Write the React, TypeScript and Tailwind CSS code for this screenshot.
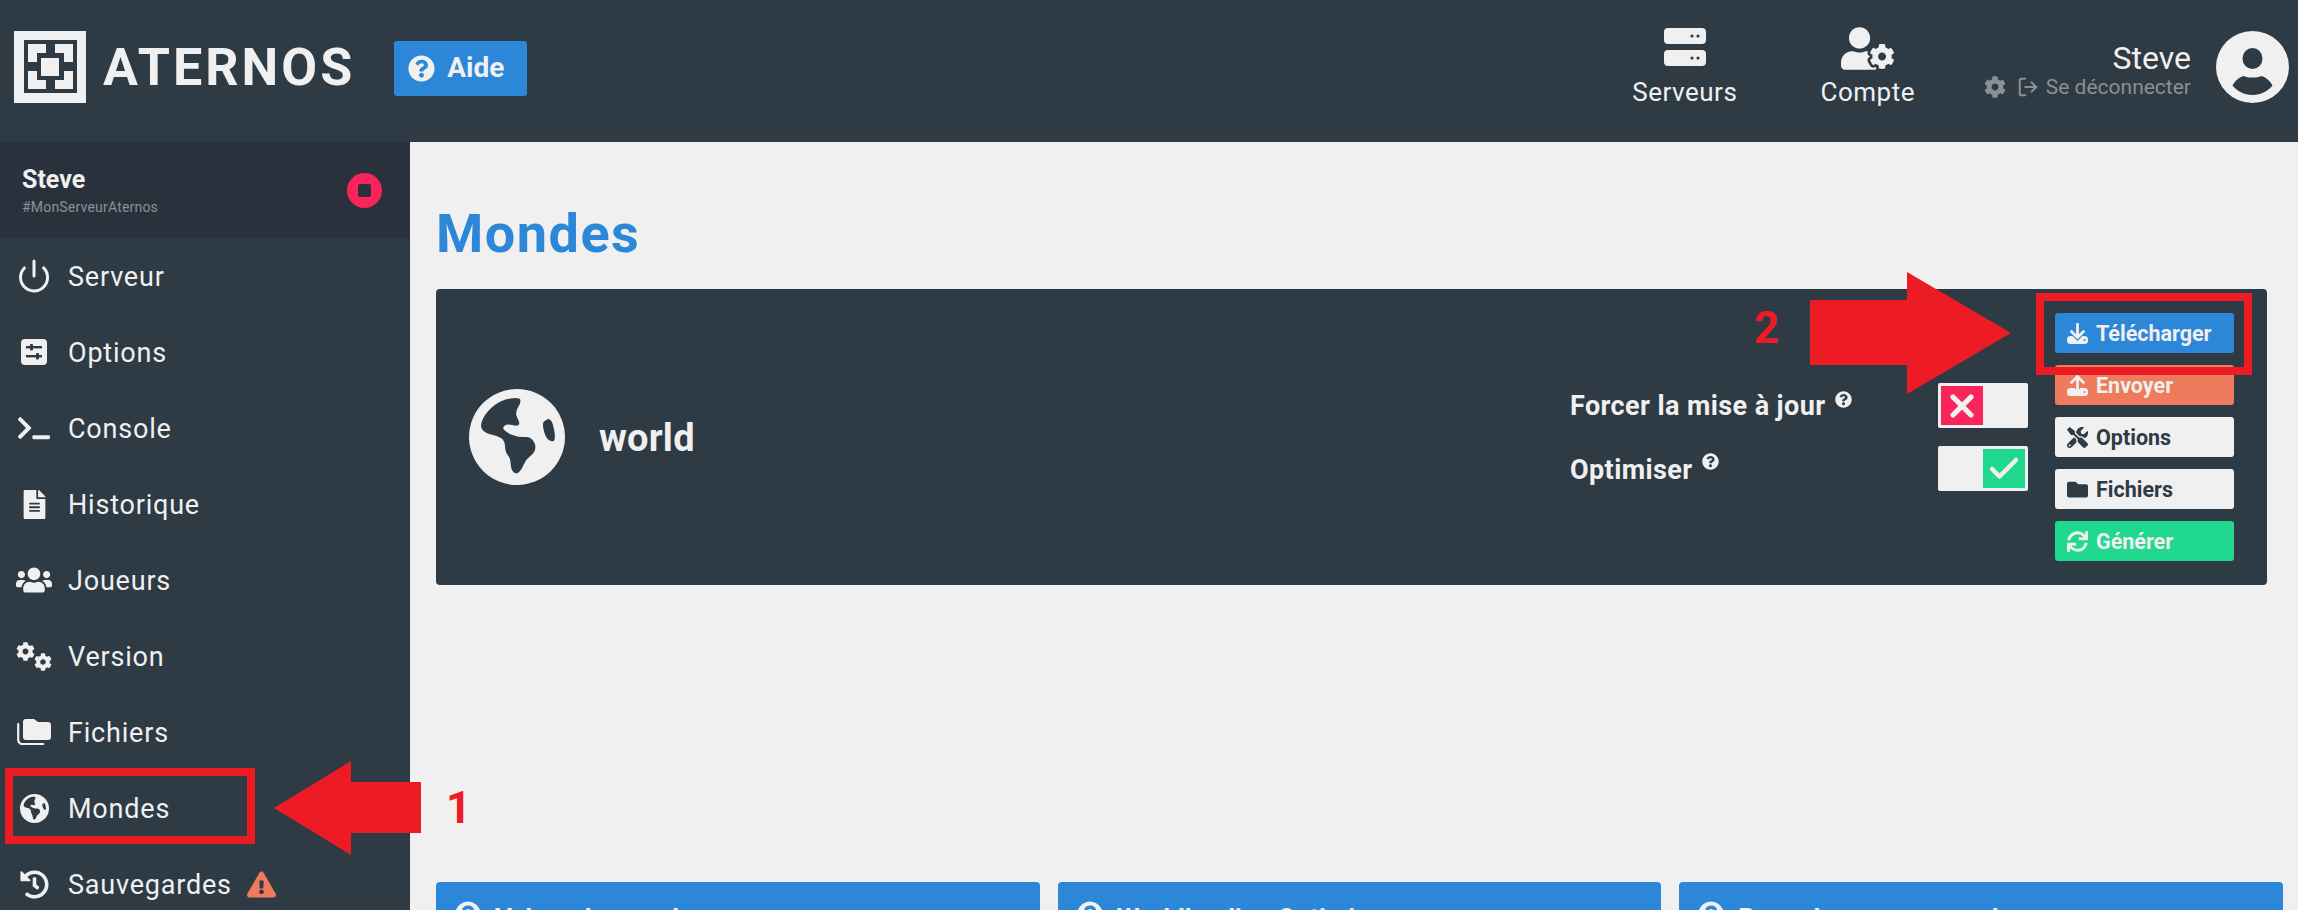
import React from "react";
import {
  FaCog, FaExclamationTriangle, FaFileAlt, FaFolder, FaHistory,
  FaQuestionCircle, FaSync, FaTerminal, FaTools, FaUserCog, FaUsers,
} from "react-icons/fa";
import { Check, LogOut, Power, X } from "lucide-react";

const DARK = "#2e3a44";

const Logo = () => (
  <svg width="72" height="72" viewBox="0 0 72 72" className="mb-[8px] shrink-0">
    <rect width="72" height="72" fill="#f0f0f0" />
    <rect x="10" y="9" width="53" height="53" fill={DARK} />
    <g fill="#f0f0f0">
      <polygon points="14,13 32,13 32,22 23,22 23,31 14,31" />
      <polygon points="41,13 59,13 59,31 50,31 50,22 41,22" />
      <polygon points="14,40 23,40 23,49 32,49 32,58 14,58" />
      <polygon points="50,40 59,40 59,58 41,58 41,49 50,49" />
      <rect x="27" y="27" width="18" height="18" />
    </g>
  </svg>
);

const ServerIcon = () => (
  <svg width="42" height="38" viewBox="0 0 42 38">
    <rect width="42" height="16" y="0" rx="4" fill="#f0f0f0" />
    <rect width="42" height="16" y="22" rx="4" fill="#f0f0f0" />
    <g fill={DARK}>
      <circle cx="28" cy="8" r="1.6" /><circle cx="34" cy="8" r="1.6" />
      <circle cx="28" cy="30" r="1.6" /><circle cx="34" cy="30" r="1.6" />
    </g>
  </svg>
);

const Avatar = () => (
  <svg width="73" height="72" viewBox="0 0 73 72" className="mb-[8px] shrink-0">
    <path
      fillRule="evenodd"
      fill="#f0f0f0"
      d="M36.5 0a36.5 36 0 1 0 0 72a36.5 36 0 1 0 0-72ZM36.5 17a10 10.5 0 1 0 0 21a10 10.5 0 1 0 0-21ZM28 45C23 46 19 50 16.5 54.500C21 60 28 64 36.500 64C45 64 52 60 56.500 54.500C54 50 50 46 45 45C42 47 31 47 28 45Z"
    />
  </svg>
);

const SlidersSquare = () => (
  <svg width="26" height="26" viewBox="0 0 26 26">
    <rect width="26" height="26" rx="4" fill="#f0f0f0" />
    <g fill={DARK}>
      <rect x="5" y="7" width="16" height="2.4" />
      <rect x="5" y="16" width="16" height="2.400" />
      <rect x="9" y="5" width="3" height="6.400" rx="1" />
      <rect x="15" y="14" width="3" height="6.400" rx="1" />
    </g>
  </svg>
);

const FoldersIcon = () => (
  <svg width="34" height="26" viewBox="0 0 34 26">
    <path d="M6 2a3 3 0 0 1 3-2h8l4 3h10a3 3 0 0 1 3 3v12a3 3 0 0 1-3 3H9a3 3 0 0 1-3-3Z" fill="#f0f0f0" />
    <path d="M1.200 5v16a4 4 0 0 0 4 4h21" fill="none" stroke="#f0f0f0" strokeWidth="2.200" strokeLinecap="round" />
  </svg>
);

const TwoCogs = () => (
  <div className="flex w-[36px] items-start">
    <FaCog size={19} className="shrink-0" />
    <FaCog size={18} className="mt-[11px] -ml-[1px] shrink-0" />
  </div>
);

const StopIcon = () => (
  <svg width="35" height="35" viewBox="0 0 35 35" className="shrink-0">
    <circle cx="17.500" cy="17.500" r="17.500" fill="#f9255a" />
    <rect x="11" y="11" width="13" height="13" rx="2" fill="#29323c" />
  </svg>
);

type Pt = [number, number];
const smooth = (pts: Pt[]) => {
  const mid = (a: Pt, b: Pt): Pt => [(a[0] + b[0]) / 2, (a[1] + b[1]) / 2];
  const start = mid(pts[pts.length - 1], pts[0]);
  let d = `M${start[0]} ${start[1]}`;
  pts.forEach((p, i) => {
    const m = mid(p, pts[(i + 1) % pts.length]);
    d += `Q${p[0]} ${p[1]} ${m[0]} ${m[1]}`;
  });
  return d + "Z";
};
const LAND: Pt[] = [
  [50.7, 8], [52, 13.7], [45.7, 23.7], [51, 33.7], [49, 37.5], [38, 34.7], [33, 38.7], [38, 44],
  [50.7, 48.5], [61, 47.5], [67, 55.3], [65.5, 64], [56.7, 70.3], [52.5, 81], [47.3, 85.5], [42, 81],
  [41.3, 68.7], [36.4, 63.7], [35.7, 51.3], [29, 47], [15.7, 44], [10.5, 36.3], [18, 22], [32.3, 11],
];
const ISLAND: Pt[] = [[82.8, 28.5], [87.500, 53.500], [77.500, 51], [73.500, 37], [74.500, 32]];

const Globe = ({ size, land }: { size: number; land: string }) => (
  <svg width={size} height={size} viewBox="0 0 96 96" className="shrink-0">
    <circle cx="48" cy="48" r="48" fill="#f0f0f0" />
    <path d={smooth(LAND)} fill={land} />
    <path d={smooth(ISLAND)} fill={land} />
  </svg>
);

const TrayArrow = ({ up, color, bg }: { up?: boolean; color: string; bg: string }) => (
  <svg width="21" height="21" viewBox="0 0 21 21" className="shrink-0">
    <rect x="0" y="13" width="21" height="8" rx="3.500" fill={color} />
    <circle cx="17.500" cy="17" r="1" fill={bg} />
    {up ? (
      <>
        <path d="M10.500 2V14M4.500 7.500L10.500 1.500L16.500 7.500" fill="none" stroke={bg} strokeWidth="5" />
        <path d="M10.500 1.500V15.500M4.500 7.500L10.500 1.500L16.500 7.500" fill="none" stroke={color} strokeWidth="2.800" strokeLinecap="round" />
      </>
    ) : (
      <>
        <path d="M10.500 1V14M4.500 8.500L10.500 14.500L16.500 8.500" fill="none" stroke={bg} strokeWidth="5" />
        <path d="M10.500 1V14M4.500 8.500L10.500 14.500L16.500 8.500" fill="none" stroke={color} strokeWidth="2.800" strokeLinecap="round" />
      </>
    )}
  </svg>
);

const navItems: [string, React.ReactNode][] = [
  ["Serveur", <Power size={36} strokeWidth={2} />],
  ["Options", <SlidersSquare />],
  ["Console", <FaTerminal size={32} />],
  ["Historique", <FaFileAlt size={29} />],
  ["Joueurs", <FaUsers size={36} />],
  ["Version", <TwoCogs />],
  ["Fichiers", <FoldersIcon />],
  ["Mondes", <Globe size={29} land={DARK} />],
  ["Sauvegardes", <FaHistory size={29} />],
];

const buttons: [string, string, string, React.ReactNode][] = [
  ["Télécharger", "bg-[#2c87d8]", "text-[#f0f0f0]", <TrayArrow color="#f0f0f0" bg="#2c87d8" />],
  ["Envoyer", "bg-[#ee7c5c]", "text-[#f0f0f0]", <TrayArrow up color="#f0f0f0" bg="#ee7c5c" />],
  ["Options", "bg-[#f0f0f0]", "text-[#2e3a44]", <FaTools size={21} />],
  ["Fichiers", "bg-[#f0f0f0]", "text-[#2e3a44]", <FaFolder size={21} />],
  ["Générer", "bg-[#20d88e]", "text-[#f0f0f0]", <FaSync size={21} />],
];

export default function App() {
  return (
    <div className="relative flex h-[910px] w-[2298px] flex-col overflow-hidden bg-[#f0f0f0] font-['Roboto',sans-serif] text-[#f0f0f0]">
      <header className="flex h-[142px] shrink-0 items-center bg-[#2e3a44] pr-[9px] pl-[14px]">
        <Logo />
        <span className="mb-[6px] ml-[17px] text-[52px] leading-none font-bold tracking-[3px]">ATERNOS</span>
        <button className="mb-[6px] ml-[39px] flex h-[55px] w-[133px] items-center gap-[12px] rounded-[3px] bg-[#2c87d8] pl-[14px] text-[28px] font-bold">
          <FaQuestionCircle size={27} />
          Aide
        </button>
        <div className="mb-[7px] ml-auto flex w-[104px] flex-col items-center gap-[11px]">
          <ServerIcon />
          <span className="text-[26px] leading-[30px] tracking-[0.5px] whitespace-nowrap">Serveurs</span>
        </div>
        <div className="mb-[14px] ml-[83px] flex w-[96px] flex-col items-center gap-[2px]">
          <FaUserCog size={53} />
          <span className="text-[26px] leading-[30px] tracking-[0.5px]">Compte</span>
        </div>
        <div className="mb-[3px] ml-[68px] flex flex-col items-end">
          <span className="text-[32px] leading-[36px]">Steve</span>
          <div className="-mt-[1px] flex items-center text-[#8b9095]">
            <FaCog size={22} />
            <LogOut size={22} strokeWidth={2.200} className="ml-[11px]" />
            <span className="ml-[7px] text-[21px] leading-[24px]">Se déconnecter</span>
          </div>
        </div>
        <div className="ml-[25px] flex">
          <Avatar />
        </div>
      </header>

      <div className="flex min-h-0 flex-1">
        <aside className="w-[410px] shrink-0 bg-[#2e3a44]">
          <div className="flex h-[96px] items-center justify-between bg-[#29323c] pr-[28px] pl-[22px]">
            <div className="pt-[1px]">
              <div className="text-[25px] leading-[28px] font-bold">Steve</div>
              <div className="mt-[5px] text-[14px] leading-[16px] tracking-[0.2px] text-[#8b9095]">#MonServeurAternos</div>
            </div>
            <StopIcon />
          </div>
          {navItems.map(([label, icon]) => (
            <div key={label} className="flex h-[76px] items-center">
              <div className="flex w-[68px] shrink-0 justify-center">{icon}</div>
              <span className="pt-[2px] text-[27px] leading-none tracking-[0.8px]">{label}</span>
              {label === "Sauvegardes" && (
                <FaExclamationTriangle size={29} className="ml-[15px] text-[#ee7c5c]" />
              )}
            </div>
          ))}
        </aside>

        <main className="min-w-0 flex-1 pl-[26px]">
          <h1 className="h-[147px] pt-[62px] text-[54px] leading-[60px] font-bold tracking-[1.5px] text-[#2c87d8]">Mondes</h1>
          <section className="flex h-[296px] w-[1831px] items-center rounded-[4px] bg-[#2e3a44] py-6 pr-[33px] pl-[33px]">
            <Globe size={96} land={DARK} />
            <span className="mt-[2px] ml-[34px] text-[38px] leading-none font-bold tracking-[0.2px]">world</span>
            <div className="ml-auto flex flex-col gap-[18px]">
              {["Forcer la mise à jour", "Optimiser"].map((label, i) => (
                <div key={label} className="flex h-[45px] items-center">
                  <div className="flex w-[368px] items-start text-[27px] leading-[32px] font-bold tracking-[0.4px]">
                    <span className={i === 1 ? "mt-[2px]" : ""}>{label}</span>
                    <FaQuestionCircle size={17} className="mt-[1px] ml-[9px]" />
                  </div>
                  <div className={`flex h-[45px] w-[90px] rounded-[2px] bg-[#f0f0f0] p-[3px] ${i === 0 ? "justify-start" : "justify-end"}`}>
                    <div className={`flex w-[42px] items-center justify-center ${i === 0 ? "bg-[#f9255a]" : "bg-[#20d88e]"}`}>
                      {i === 0 ? <X size={36} strokeWidth={3.500} /> : <Check size={36} strokeWidth={3} />}
                    </div>
                  </div>
                </div>
              ))}
            </div>
            <div className="ml-[27px] flex flex-col gap-[12px]">
              {buttons.map(([label, bg, fg, icon]) => (
                <button key={label} className={`flex h-10 w-[179px] items-center gap-[8px] rounded-[3px] pl-[12px] text-[21.5px] font-bold ${bg} ${fg}`}>
                  {icon}
                  <span className="pt-[2px]">{label}</span>
                </button>
              ))}
            </div>
          </section>
          <div className="mt-[297px] flex w-[1847px] gap-[18px]">
            {["Valeur du monde", "Worldloading Optimiser", "Pour charger un monde"].map((title) => (
              <div key={title} className="flex h-[80px] w-[604px] items-start gap-[14px] rounded-[4px] bg-[#2c87d8] pt-[19px] pl-[19px]">
                <FaQuestionCircle size={26} />
                <span className="mt-[2px] text-[26px] leading-[30px] font-bold">{title}</span>
              </div>
            ))}
          </div>
        </main>
      </div>

      {/* Annotations painted over the screenshot */}
      <div className="absolute top-[768px] left-[5px] h-[76px] w-[250px] border-8 border-[#ed1c24]" />
      <svg className="absolute top-[761px] left-[274px]" width="147" height="94" viewBox="0 0 147 94">
        <path d="M0 47L77 0V21H147V72H77V94Z" fill="#ed1c24" />
      </svg>
      <span className="absolute top-[782px] left-[446px] text-[44px] leading-[52px] font-bold text-[#ed1c24]">1</span>

      <div className="absolute top-[293px] left-[2036px] h-[82px] w-[216px] border-8 border-[#ed1c24]" />
      <svg className="absolute top-[272px] left-[1810px]" width="201" height="122" viewBox="0 0 201 122">
        <path d="M0 28H97V0L201 61L97 122V93H0Z" fill="#ed1c24" />
      </svg>
      <span className="absolute top-[302px] left-[1754px] text-[44px] leading-[52px] font-bold text-[#ed1c24]">2</span>
    </div>
  );
}
